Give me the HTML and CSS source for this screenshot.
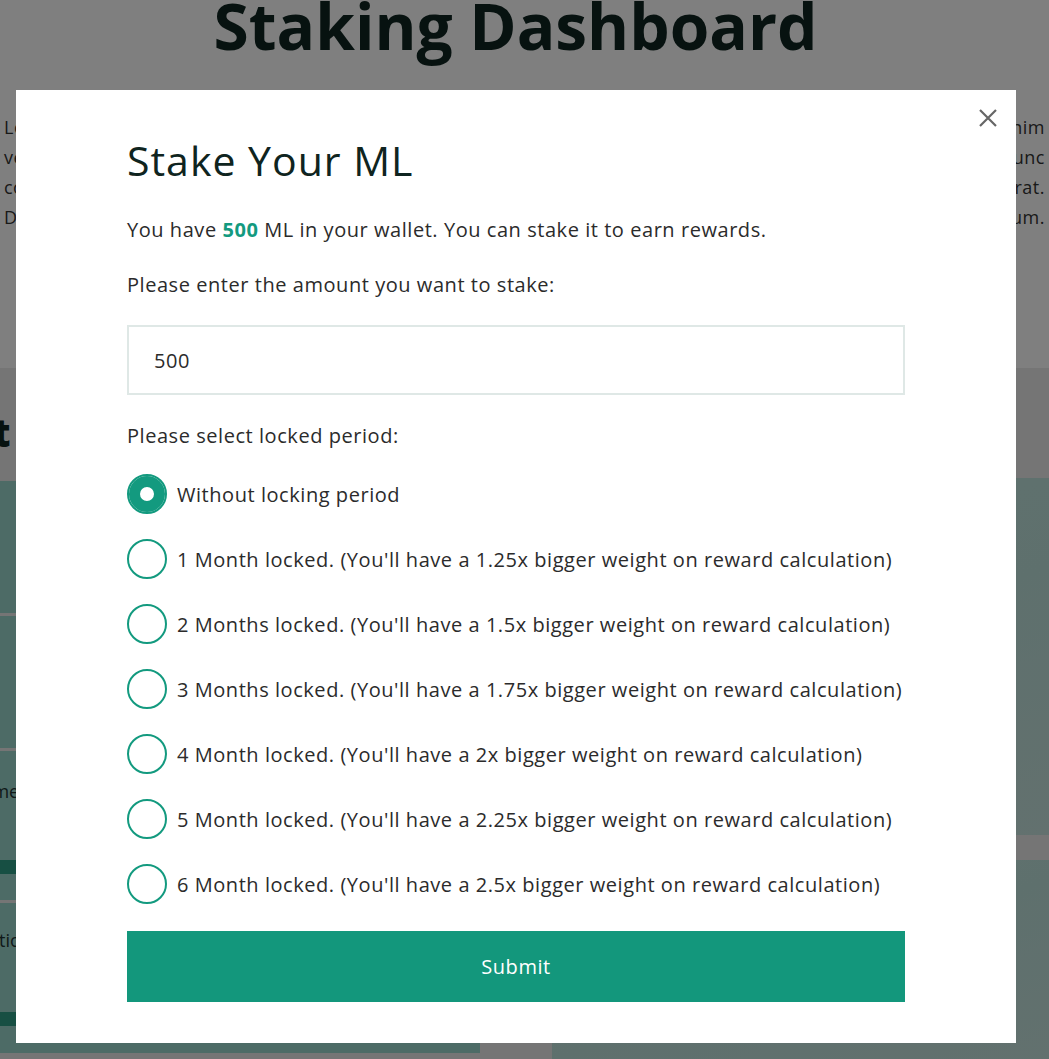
FILE: index.html
```html
<!DOCTYPE html>
<html lang="en">
<head>
<meta charset="utf-8">
<title>Staking Dashboard</title>
<link rel="stylesheet" href="styles.css">
</head>
<body>
<div class="page">
  <header class="hero">
    <h1 class="hero-title">Staking Dashboard</h1>
    <p class="hero-text">Lorem ipsum dolor sit amet, consectetur adipiscing elit, sed do eiusmod tempor a magna aliqua. Ut enim ad minim veniam, quis nostrud exercitation ullamco laboris nisi. Praesent sagittis, mauris at tristique pulvinar, ligula nunc convallis nisl, ut mattis quam. Maecenas euismod neque id viverra sagittis, velit ligula ornare, sed rhoncus erat. Donec fermentum facilisis sem, ac tristique arcu rutrum vitae ipsum.</p>
  </header>
  <section class="pools">
    <h2 class="pools-title">Stat</h2>
    <div class="pools-grid">
      <div class="cards">
        <div class="card"></div>
        <div class="card"></div>
        <div class="card card-tall"><span class="card-label">Time</span><div class="card-bar"></div></div>
        <div class="card card-tall"><span class="card-label">Ratio</span><div class="card-bar"></div></div>
      </div>
      <div class="panels">
        <div class="panel panel-big"></div>
        <div class="panel panel-small"></div>
      </div>
    </div>
  </section>
</div>

<div class="overlay"></div>

<div class="modal" role="dialog" aria-labelledby="stake-title">
  <button class="modal-close" aria-label="Close">
    <svg width="20" height="20" viewBox="0 0 20 20"><path d="M2 2 L18 18 M18 2 L2 18" stroke="#666" stroke-width="2.2" fill="none" stroke-linecap="butt"/></svg>
  </button>
  <h2 class="modal-title" id="stake-title">Stake Your ML</h2>
  <p class="modal-text">You have <strong class="accent">500</strong> ML in your wallet. You can stake it to earn rewards.</p>
  <label class="modal-text label-amount" for="amount">Please enter the amount you want to stake:</label>
  <input class="amount-input" id="amount" type="text" value="500">
  <p class="modal-text label-period">Please select locked period:</p>
  <div class="options">
    <label class="option"><input type="radio" name="period" checked><span>Without locking period</span></label>
    <label class="option"><input type="radio" name="period"><span>1 Month locked. (You'll have a 1.25x bigger weight on reward calculation)</span></label>
    <label class="option"><input type="radio" name="period"><span>2 Months locked. (You'll have a 1.5x bigger weight on reward calculation)</span></label>
    <label class="option"><input type="radio" name="period"><span>3 Months locked. (You'll have a 1.75x bigger weight on reward calculation)</span></label>
    <label class="option"><input type="radio" name="period"><span>4 Month locked. (You'll have a 2x bigger weight on reward calculation)</span></label>
    <label class="option"><input type="radio" name="period"><span>5 Month locked. (You'll have a 2.25x bigger weight on reward calculation)</span></label>
    <label class="option"><input type="radio" name="period"><span>6 Month locked. (You'll have a 2.5x bigger weight on reward calculation)</span></label>
  </div>
  <button class="submit-btn">Submit</button>
</div>
</body>
</html>
```

FILE: styles.css
```css
* { box-sizing: border-box; }

html, body {
  margin: 0;
  padding: 0;
  height: 100%;
  overflow: hidden;
}

body {
  font-family: "Open Sans", "Noto Sans", sans-serif;
  color: #2b2b2b;
  background: #ffffff;
}

/* ---------- background page ---------- */
.page {
  width: 100%;
}

.hero {
  display: flow-root;
  height: 368px;
  background: #ffffff;
}

.hero-title {
  margin: -12px 0 0;
  text-align: center;
  font-size: 64px;
  line-height: 76px;
  font-weight: 700;
  color: #0f2420;
  padding-right: 18px;
}

.hero-text {
  margin: 48px 0 0;
  padding: 0 4px;
  font-size: 18px;
  line-height: 30px;
  letter-spacing: 0.5px;
  text-align: justify;
  text-align-last: justify;
  color: #333;
}

.pools {
  background: #ebebeb;
  padding-top: 40px;
}

.pools-title {
  margin: 0 0 0 -70px;
  font-size: 38px;
  line-height: 48px;
  font-weight: 800;
  color: #0f2420;
  height: 73px;
}

.pools-grid {
  display: flex;
  gap: 72px;
  align-items: flex-start;
}

.cards {
  width: 480px;
  display: flex;
  flex-direction: column;
  gap: 3px;
}

.card {
  background: #9ad6cc;
  height: 132px;
}

.card-tall {
  height: 149px;
  padding-top: 28px;
}

.card-label {
  display: block;
  margin-left: -22px;
  font-size: 18px;
  line-height: 24px;
  color: #233;
}

.card-bar {
  margin-top: 57px;
  height: 14px;
  background: #2f9e86;
}

.cards .card:nth-child(4) {
  height: 150px;
  padding-top: 25px;
}
.cards .card:nth-child(4) .card-bar {
  margin-top: 60px;
}

.panels {
  flex: 1;
  display: flex;
  flex-direction: column;
  gap: 25px;
  margin-top: -3px;
}

.panel {
  background: linear-gradient(160deg, #c2e4de 0%, #bde1db 50%, #c6e2de 100%);
}

.panel-big { height: 357px; }
.panel-small { height: 220px; }

/* ---------- overlay ---------- */
.overlay {
  position: fixed;
  inset: 0;
  background: rgba(0, 0, 0, 0.5);
}

/* ---------- modal ---------- */
.modal {
  position: fixed;
  top: 90px;
  left: 16px;
  width: 1000px;
  background: #ffffff;
  padding: 45px 111px 41px;
  display: flex;
  flex-direction: column;
  font-family: "Open Sans", "Noto Sans", sans-serif;
  letter-spacing: 0.55px;
}

.modal-close {
  position: absolute;
  top: 18px;
  right: 18px;
  width: 20px;
  height: 20px;
  padding: 0;
  border: 0;
  background: transparent;
  display: flex;
}

.modal-title {
  margin: 0;
  font-size: 41px;
  line-height: 50px;
  font-weight: 400;
  letter-spacing: 1px;
  color: #0f2420;
}

.modal-text {
  display: block;
  margin: 30px 0 0;
  font-size: 20px;
  line-height: 30px;
  color: #2b2b2b;
}

.accent {
  color: #139a7f;
  font-weight: 700;
}

.label-amount { margin-top: 25px; }

.amount-input {
  margin-top: 25px;
  height: 70px;
  width: 100%;
  border: 2px solid #dfe8e6;
  padding: 0 25px;
  font-family: inherit;
  font-size: 20px;
  letter-spacing: 0.55px;
  color: #2b2b2b;
  outline: none;
  background: #fff;
}

.label-period { margin-top: 26px; }

.options {
  margin-top: 23px;
  display: flex;
  flex-direction: column;
  gap: 25px;
}

.option {
  display: flex;
  align-items: center;
  gap: 10px;
  height: 40px;
  font-size: 20px;
  color: #2b2b2b;
}

.option input {
  appearance: none;
  -webkit-appearance: none;
  margin: 0;
  width: 40px;
  height: 40px;
  flex: none;
  border: 2px solid #139a7f;
  border-radius: 50%;
  background: #fff;
}

.option input:checked {
  box-shadow: inset 0 0 0 11px #139a7f;
}

.submit-btn {
  margin-top: 27px;
  height: 71px;
  width: 100%;
  border: 0;
  background: #13977c;
  color: #ffffff;
  font-family: inherit;
  font-size: 20px;
  letter-spacing: 0.55px;
}
```
